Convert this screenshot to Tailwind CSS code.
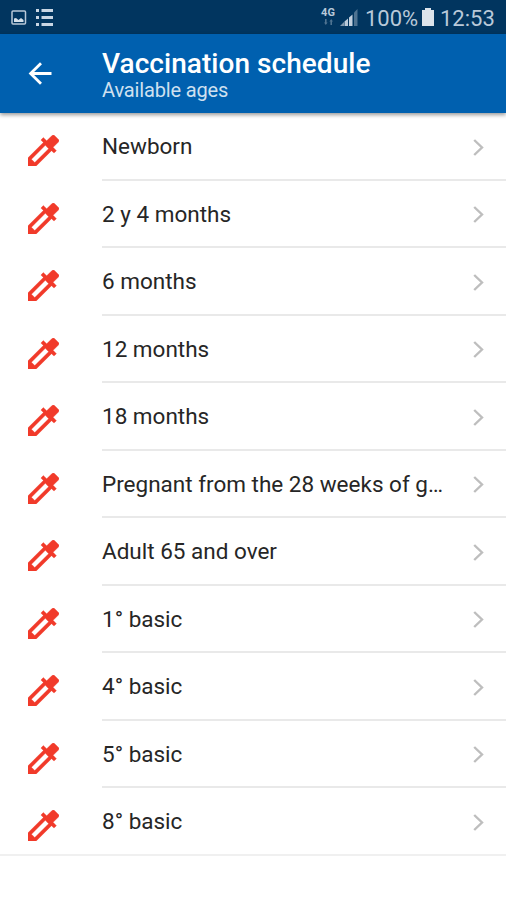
<!DOCTYPE html>
<html lang="en">
<head>
<meta charset="utf-8">
<title>Vaccination schedule</title>
<script src="https://cdn.jsdelivr.net/npm/@tailwindcss/browser@4"></script>
</head>
<body class="h-[900px] overflow-hidden bg-white font-['Roboto',sans-serif]">
<div class="flex h-[34px] items-center bg-[#01355f] pl-[11px] pr-[11px] text-[#b9c9d9]">
  <svg class="mt-px h-[15px] w-[16px]" viewBox="0 0 16 15"><rect x="1" y="1" width="13.5" height="13" rx="1" fill="none" stroke="currentColor" stroke-width="1.5"/><path d="M3 12V8.500l2-.5 2.500 2L10 8l2.500 2v2z" fill="#d5e0ea"/></svg>
  <svg class="ml-[8px] mt-px h-[17px] w-[18px]" viewBox="0 0 18 17" fill="#c9d6e4"><path d="M1 0h3v3H1zM6.500 0H18v3H6.500zM1 7h3v3H1zM6.500 7H18v3H6.500zM1 14h3v3H1zM6.500 14H18v3H6.500z"/></svg>
  <div class="ml-auto flex items-center">
    <div class="flex w-[16px] flex-col items-center pb-[1px]">
      <span class="text-[11px] font-bold leading-[10px]">4G</span>
      <svg class="mt-px h-[6px] w-[9px] text-[#4f7391]" viewBox="0 0 9 6" fill="currentColor"><path d="M1 0h1.600v3.500H3.600L1.800 6 0 3.500h1zM6.400 6H8V2.500h1L7.200 0 5.400 2.500h1z"/></svg>
    </div>
    <svg class="ml-[4px] mt-px h-[17px] w-[18px]" viewBox="0 0 18 17"><path d="M0 17h4v-4z" fill="#8199af"/><path d="M4.500 17V12.500L8 9.500V17z" fill="#b9c9d9"/><path d="M9 17V8.500l3.500-3V17z" fill="#c3d0de"/><path d="M14 17V3.500L17.500 0v17z" fill="#4f7391"/></svg>
    <span class="ml-[7px] mt-[3px] w-[54px] whitespace-nowrap text-[22px] leading-[24px]">100%</span>
    <svg class="ml-[3px] h-[18px] w-[12px]" viewBox="0 0 12 18" fill="#dce4ec"><path d="M3 0h6v2h3v16H0V2h3z"/></svg>
    <span class="ml-[6px] mt-[3px] w-[55px] whitespace-nowrap text-[22px] leading-[24px]">12:53</span>
  </div>
</div>
<header class="relative flex h-[79px] bg-[#0060af] pl-[28px] text-white shadow-[0_2px_4px_rgba(0,0,0,0.4)]">
  <svg class="mt-[28px] h-[23px] w-[24px]" viewBox="0 0 24 23" fill="none" stroke="currentColor" stroke-width="2.800"><path d="M23.500 11.500H3M13 1.200L2.600 11.500 13 21.800"/></svg>
  <div class="ml-[50px] pt-[14px]">
    <h1 class="text-[28px] font-medium leading-[31px] tracking-[0.05px]">Vaccination schedule</h1>
    <p class="text-[20px] leading-[22px] tracking-[-0.15px] text-[#cfe0f0]">Available ages</p>
  </div>
</header>
<main id="list" class="border-b-2 border-[#f0f0f0]"></main>
<template id="row">
  <div class="flex h-[67.500px] pl-[28px] last:h-[66px]">
    <svg class="mt-[22px] h-[31px] w-[31px]" viewBox="3 3 18 18" fill="#f13a2a" stroke="#f13a2a" stroke-width="0.200"><path d="M20.710 5.630l-2.340-2.340c-.39-.39-1.020-.39-1.410 0l-3.120 3.120-1.930-1.910-1.410 1.410 1.420 1.420L3 16.250V21h4.750l8.920-8.920 1.420 1.420 1.410-1.410-1.920-1.920 3.120-3.120c.4-.4.4-1.030.01-1.420zM6.920 19L5 17.080l8.060-8.060 1.920 1.920L6.920 19z"/></svg>
    <div class="line ml-[43px] flex flex-1 justify-between pr-[22px]">
      <span class="mt-[18px] w-[350px] whitespace-nowrap text-[22.500px] leading-[30px] text-[#262626]"></span>
      <svg class="mt-[25.500px] h-[17px] w-[11px]" viewBox="0 0 11 17" fill="none" stroke="#bebebe" stroke-width="2.400"><path d="M1.200 1L9 8.500 1.200 16"/></svg>
    </div>
  </div>
</template>
<script>
const labels = ['Newborn','2 y 4 months','6 months','12 months','18 months','Pregnant from the 28 weeks of g…','Adult 65 and over','1° basic','4° basic','5° basic','8° basic'];
const list = document.getElementById('list');
labels.forEach((label, i) => {
  const row = document.getElementById('row').content.cloneNode(true);
  row.querySelector('span').textContent = label;
  if (i < labels.length - 1) row.querySelector('.line').className += ' border-b-2 border-[#e9e9e9]';
  list.appendChild(row);
});
</script>
</body>
</html>
